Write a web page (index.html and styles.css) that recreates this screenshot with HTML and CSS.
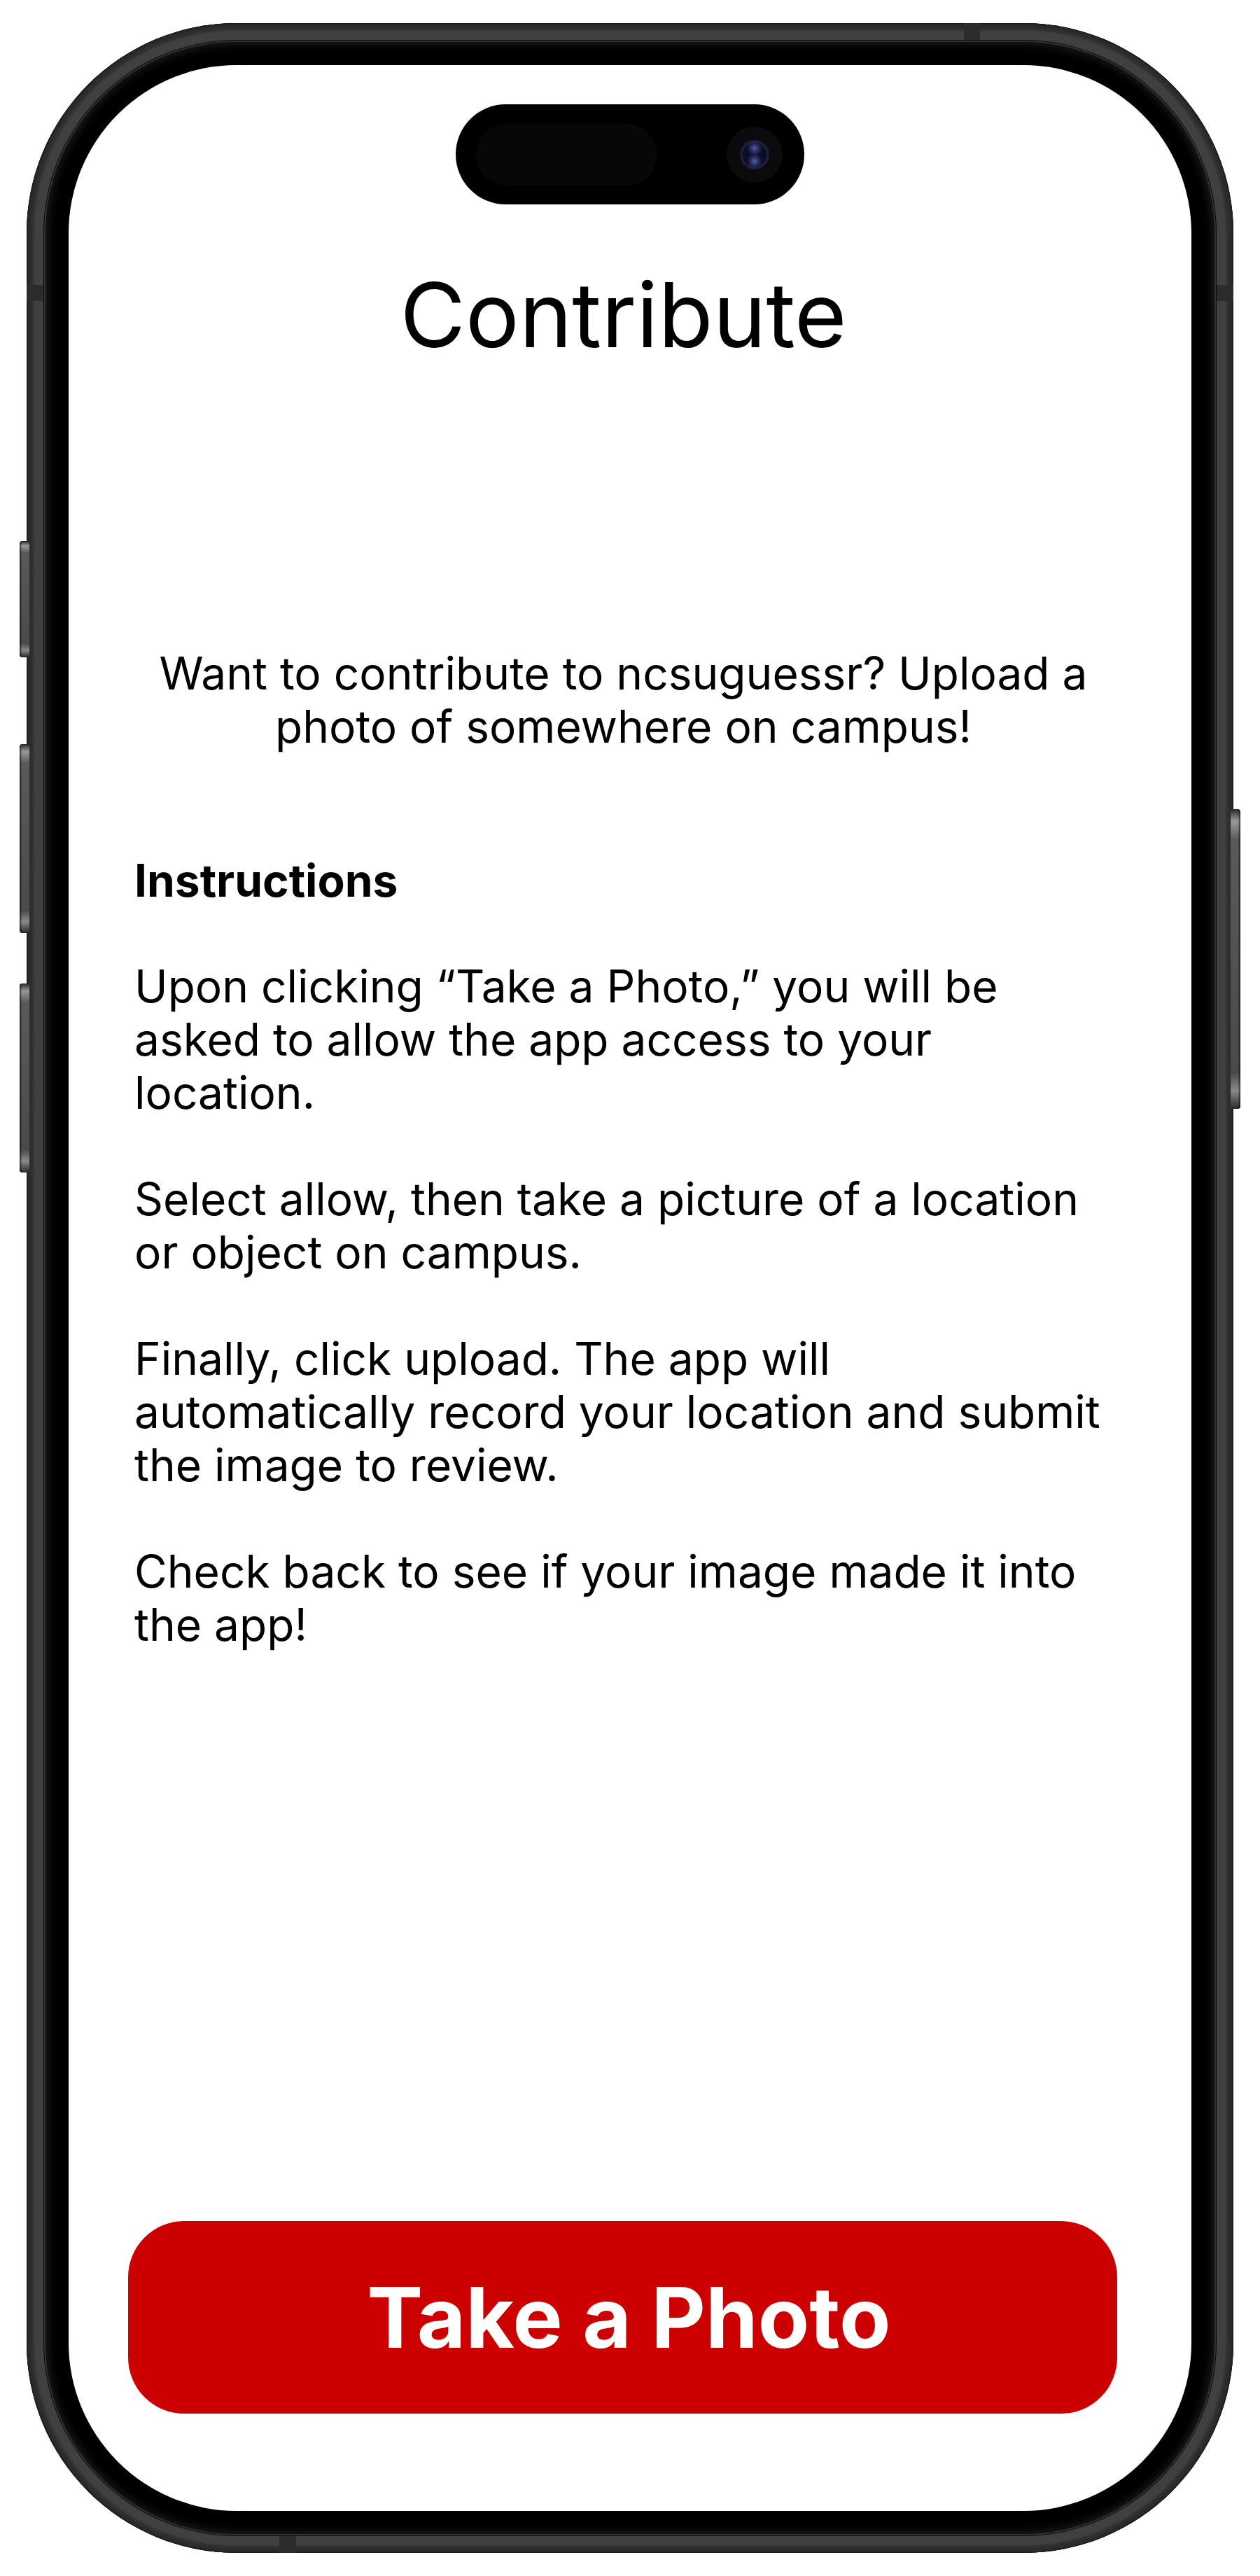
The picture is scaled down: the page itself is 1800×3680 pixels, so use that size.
FILE: index.html
```html
<!DOCTYPE html>
<html lang="en">
<head>
<meta charset="utf-8">
<title>Contribute</title>
<link rel="stylesheet" href="styles.css">
</head>
<body>
<div class="phone">
  <span class="side-btn action"></span>
  <span class="side-btn vol-up"></span>
  <span class="side-btn vol-down"></span>
  <span class="side-btn power"></span>
  <span class="antenna ant-top"></span>
  <span class="antenna ant-left"></span>
  <span class="antenna ant-right"></span>
  <span class="antenna ant-bottom"></span>
  <div class="bezel">
    <div class="screen">
      <div class="island">
        <span class="sensor"></span>
        <span class="camera"><span class="lens"></span></span>
      </div>
      <main class="content">
        <h1 class="title">Contribute</h1>
        <p class="intro">Want to contribute to ncsuguessr? Upload a<br>photo of somewhere on campus!</p>
        <h2 class="heading">Instructions</h2>
        <p class="step first">Upon clicking “Take a Photo,” you will be<br>asked to allow the app access to your<br>location.</p>
        <p class="step">Select allow, then take a picture of a location<br>or object on campus.</p>
        <p class="step">Finally, click upload. The app will<br>automatically record your location and submit<br>the image to review.</p>
        <p class="step">Check back to see if your image made it into<br>the app!</p>
        <button class="cta" type="button">Take a Photo</button>
      </main>
    </div>
  </div>
</div>
</body>
</html>
```

FILE: styles.css
```css
* { box-sizing: border-box; }

html, body {
  margin: 0;
  padding: 0;
  background: #ffffff;
}

body {
  font-family: "Inter", "Roboto", "Liberation Sans", sans-serif;
  color: #000;
}

.phone {
  position: relative;
  width: 1724px;
  height: 3614px;
  margin: 33px 0 0 38px;
  padding: 25px;
  border-radius: 300px;
  background: #404040;
  box-shadow:
    inset 0 0 0 1px #1a1a1a,
    inset 0 0 6px 5px #262626,
    inset 0 0 2px 10px rgba(30, 30, 30, 0.35);
}

.side-btn {
  position: absolute;
  width: 14px;
  border-radius: 4px;
  background: linear-gradient(to bottom, #2a2a2a 0, #9a9a9a 4%, #5a5a5a 10%, #4a4a4a 88%, #8a8a8a 94%, #2a2a2a 100%);
  box-shadow: inset 2px 0 2px rgba(0, 0, 0, 0.6);
}
.side-btn.action   { left: -10px; top: 740px;  height: 166px; }
.side-btn.vol-up   { left: -10px; top: 1030px; height: 270px; }
.side-btn.vol-down { left: -10px; top: 1372px; height: 270px; }
.side-btn.power    { right: -10px; top: 1123px; height: 428px; box-shadow: inset -2px 0 2px rgba(0, 0, 0, 0.6); }

.antenna {
  position: absolute;
  background: #2c2c2c;
}
.ant-top    { top: 0; left: 1339px; width: 23px; height: 25px; }
.ant-bottom { bottom: 0; left: 361px; width: 24px; height: 25px; }
.ant-left   { left: 0; top: 374px; width: 25px; height: 23px; }
.ant-right  { right: 0; top: 374px; width: 25px; height: 23px; }

.bezel {
  position: relative;
  height: 100%;
  padding: 35px;
  border-radius: 275px;
  background: #000;
  box-shadow:
    0 0 0 1px #0c0c0c,
    inset 0 0 0 2px #303030,
    inset 0 0 12px 6px #1a1a1a;
}

.screen {
  position: relative;
  height: 100%;
  border-radius: 240px;
  background: #fff;
  overflow: hidden;
  display: flex;
  flex-direction: column;
}

.island {
  position: absolute;
  top: 56px;
  left: 50%;
  width: 498px;
  height: 143px;
  margin-left: -249px;
  border-radius: 72px;
  background: #000;
}
.sensor {
  position: absolute;
  left: 29px;
  top: 28px;
  width: 259px;
  height: 88px;
  border-radius: 44px;
  background: #070707;
}
.camera {
  position: absolute;
  left: 387px;
  top: 32px;
  width: 80px;
  height: 80px;
  border-radius: 50%;
  background: #0b0a0d;
  display: flex;
  align-items: center;
  justify-content: center;
}
.lens {
  width: 42px;
  height: 42px;
  border-radius: 50%;
  background:
    radial-gradient(circle at 50% 28%, #5a5f9a 0, #2a2f66 14%, transparent 30%),
    radial-gradient(circle at 50% 72%, #2f7a7a 0, #3a2a6a 14%, transparent 30%),
    radial-gradient(circle, #0a0c26 0, #0a0c26 55%, #1c2038 60%, #161a2c 100%);
}

.content {
  flex: 1;
  display: flex;
  flex-direction: column;
  padding: 279px 113px 139px 94px;
}

.title {
  margin: 0;
  font-size: 128px;
  line-height: 155px;
  font-weight: 400;
  text-align: center;
}

.intro {
  margin: 397px 0 0;
  font-size: 64px;
  line-height: 76px;
  text-align: center;
}

.heading {
  margin: 144px 0 0;
  font-size: 64px;
  line-height: 76px;
  font-weight: 700;
}

.step {
  margin: 76px 0 0;
  font-size: 64px;
  line-height: 76px;
}
.step.first { margin-top: 75px; }

.cta {
  margin: auto -7px 0 -9px;
  height: 275px;
  padding: 0 0 0 18px;
  border: 0;
  border-radius: 80px;
  background: #cc0000;
  color: #fff;
  font-family: inherit;
  font-size: 120px;
  font-weight: 700;
  line-height: 1;
  cursor: pointer;
}
```
